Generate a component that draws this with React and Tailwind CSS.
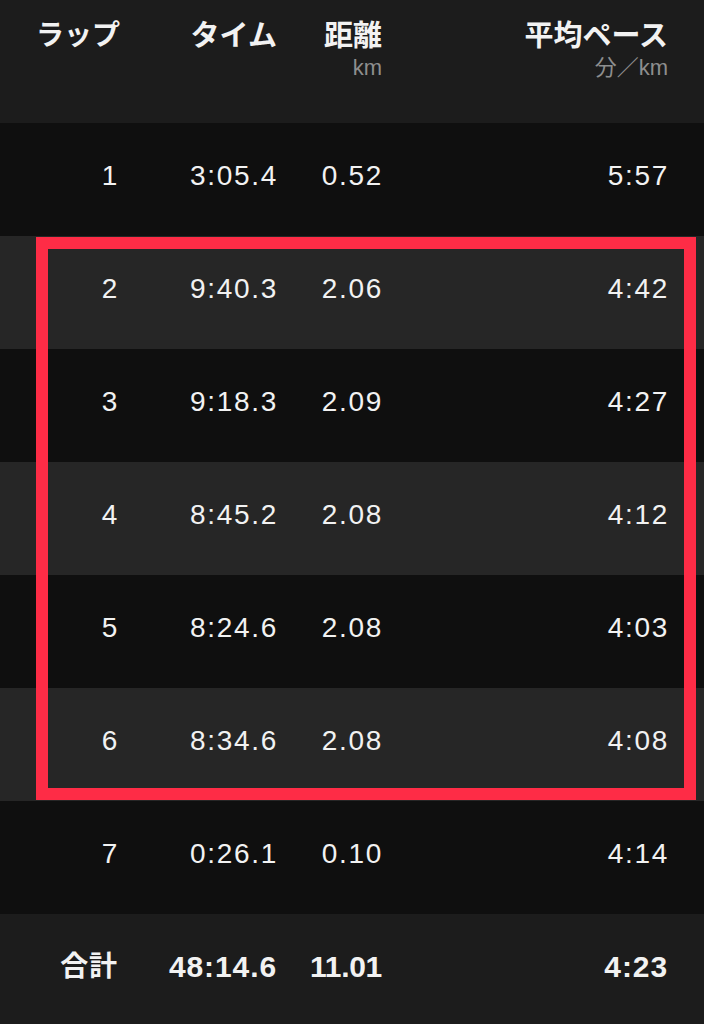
import React from "react";

const rows = [
  ["1", "3:05.4", "0.52", "5:57"],
  ["2", "9:40.3", "2.06", "4:42"],
  ["3", "9:18.3", "2.09", "4:27"],
  ["4", "8:45.2", "2.08", "4:12"],
  ["5", "8:24.6", "2.08", "4:03"],
  ["6", "8:34.6", "2.08", "4:08"],
  ["7", "0:26.1", "0.10", "4:14"],
];

const font = { fontFamily: '"Liberation Sans", "Noto Sans CJK JP", sans-serif' };

export default function App() {
  return (
    <div className="relative w-[704px] h-[1024px] overflow-hidden bg-[#0f0f0f] text-[#f2f2f2]" style={font}>
      <div className="grid grid-cols-[118px_159px_105px_286px] h-[123px] bg-[#1c1c1c] pt-[18px]">
        <div className="text-right text-[28px] font-bold leading-[36px] mr-[-2px]">ラップ</div>
        <div className="text-right text-[29px] font-bold leading-[36px]">タイム</div>
        <div className="flex flex-col items-end">
          <div className="text-[29px] font-bold leading-[36px]">距離</div>
          <div className="text-[22px] leading-[24px] text-[#8e8e8e] mt-[2px]">km</div>
        </div>
        <div className="flex flex-col items-end">
          <div className="text-[29px] font-bold leading-[36px]">平均ペース</div>
          <div className="text-[22px] leading-[24px] text-[#8e8e8e] mt-[2px]">分／km</div>
        </div>
      </div>
      {rows.map((r, i) => (
        <div
          key={r[0]}
          className={`grid grid-cols-[118px_159px_105px_286px] h-[113px] items-center pb-[8px] text-[28px] tracking-[0.06em] ${i % 2 === 0 ? "bg-[#0f0f0f]" : "bg-[#262626]"}`}
        >
          <div className="text-right mr-[-1px]">{r[0]}</div>
          <div className="text-right mr-[-1px]">{r[1]}</div>
          <div className="text-right mr-[-1px]">{r[2]}</div>
          <div className="text-right mr-[-1px]">{r[3]}</div>
        </div>
      ))}
      <div className="grid grid-cols-[118px_159px_105px_286px] h-[113px] items-center pb-[8px] bg-[#1c1c1c] text-[30px] font-bold tracking-[0.03em]">
        <div className="text-right text-[28px]">合計</div>
        <div className="text-right">48:14.6</div>
        <div className="text-right tracking-[-0.01em]">11.01</div>
        <div className="text-right">4:23</div>
      </div>
      <div className="absolute left-[36px] top-[237px] w-[660px] h-[563px] border-[12px] border-[#fe2c46]" />
    </div>
  );
}
